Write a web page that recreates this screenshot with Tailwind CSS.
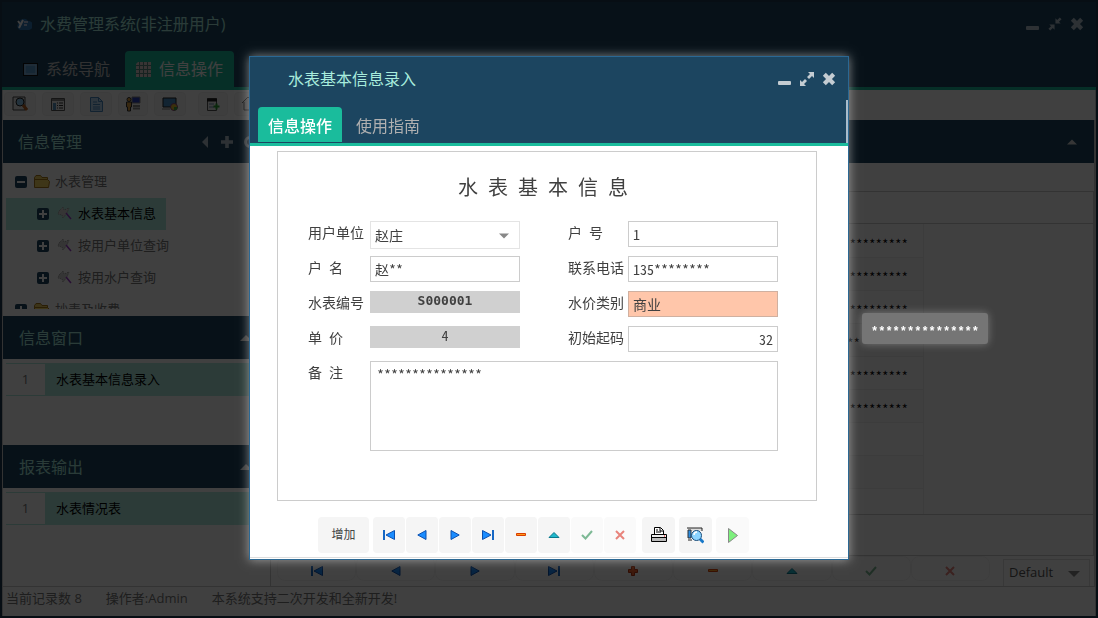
<!DOCTYPE html>
<html lang="zh-CN">
<head>
  <meta charset="UTF-8" />
  <meta name="viewport" content="width=device-width, initial-scale=1.0"/>
  <title>水费管理系统</title>
  <script src="https://cdn.jsdelivr.net/npm/@tailwindcss/browser@4"></script>
  <style>
    body {
      font-family: 'Open Sans', 'Noto Sans CJK SC', sans-serif;
    }
    .form-text {
      font-family: 'Noto Sans Mono CJK SC', 'Noto Sans CJK SC', monospace;
    }
  </style>
</head>
<body class="text-[13px] text-[#777] overflow-hidden">

  <!-- iconos compartidos -->
  <svg class="hidden">
    <symbol id="i-first" viewBox="0 0 12 10"><path d="M0 0h2v10H0z" fill="#1667c4"/><path d="M11.500.5v9L3 5z" fill="#1a8cff" stroke="#0b50b0"/></symbol>
    <symbol id="i-prev" viewBox="0 0 10 10"><path d="M9 .5v9L.8 5z" fill="#1a8cff" stroke="#0b50b0"/></symbol>
    <symbol id="i-next" viewBox="0 0 10 10"><path d="M1 .5v9L9.200 5z" fill="#1a8cff" stroke="#0b50b0"/></symbol>
    <symbol id="i-last" viewBox="0 0 12 10"><path d="M10 0h2v10h-2z" fill="#1667c4"/><path d="M.5.5v9L9 5z" fill="#1a8cff" stroke="#0b50b0"/></symbol>
    <symbol id="i-minus" viewBox="0 0 10 10"><path d="M.5 3.500h9v2h-9z" fill="#ff9a1a" stroke="#d83c00"/></symbol>
    <symbol id="i-plus" viewBox="0 0 10 10"><path d="M3.500.5h3v3h3v3h-3v3h-3v-3h-3v-3h3z" fill="#f2602a" stroke="#b8330c"/></symbol>
    <symbol id="i-up" viewBox="0 0 12 10"><path d="M6 2.500 11 7.500H1z" fill="#1fb8cc" stroke="#08788c"/></symbol>
    <symbol id="i-check" viewBox="0 0 12 10"><path d="M1 5l3.500 3.500L11 1" fill="none" stroke="#7db995" stroke-width="2"/></symbol>
    <symbol id="i-cross" viewBox="0 0 10 10"><path d="M1 1l8 8M9 1L1 9" fill="none" stroke="#e8837b" stroke-width="2"/></symbol>
    <symbol id="i-close" viewBox="0 0 12 12"><path d="M2 2l8 8M10 2l-8 8" stroke="currentColor" stroke-width="3.600" fill="none"/></symbol>
    <symbol id="i-min" viewBox="0 0 14 14"><rect y="9" width="13" height="4" rx="1" fill="currentColor"/></symbol>
    <symbol id="i-expand" viewBox="0 0 16 16"><path d="M9 1h6v6l-2-2-3 3-2-2 3-3zM7 15H1V9l2 2 3-3 2 2-3 3z" fill="currentColor"/></symbol>
    <symbol id="i-shrink" viewBox="0 0 16 16"><path d="M8.500 7.500v-6l2 2 3-3 2 2-3 3 2 2zM7.500 8.500v6l-2-2-3 3-2-2 3-3-2-2z" fill="currentColor"/></symbol>
    <symbol id="i-caret-up" viewBox="0 0 12 6"><path d="M6 0l6 6H0z" fill="currentColor"/></symbol>
    <symbol id="i-caret-down" viewBox="0 0 12 6"><path d="M0 0h12L6 6z" fill="currentColor"/></symbol>
    <symbol id="i-tree-plus" viewBox="0 0 12 12"><rect width="12" height="12" rx="2" fill="#1c4560"/><path d="M6 2v8M2 6h8" stroke="#fff" stroke-width="2"/></symbol>
    <symbol id="i-tree-minus" viewBox="0 0 12 12"><rect width="12" height="12" rx="2" fill="#1c4560"/><path d="M2 6h8" stroke="#fff" stroke-width="2"/></symbol>
    <symbol id="i-folder" viewBox="0 0 16 14"><path d="M.5 11V2.500L2 .5h4.500l1.500 2h5.500V5" fill="#f0d060" stroke="#a87818"/><path d="M.5 12.500V4.500h13l2 2-1 6z" fill="#f8d860" stroke="#a87818"/></symbol>
    <symbol id="i-tool" viewBox="0 0 16 16"><path d="M2 5 6 1l1 3 5-2-2 5-4 5-1-3-4-1z" fill="#d4d4d4" stroke="#999" stroke-dasharray="1 1"/><path d="M9 7l5 6" stroke="#9a3cc8" stroke-width="1.500"/></symbol>
  </svg>

  <!-- ventana principal -->
  <div class="h-screen flex flex-col bg-white border-2 border-[#1c3a52]">
    <header class="bg-[#1c4560] border-b-3 border-[#1abc9c]">
      <div class="h-12 flex items-center pl-[14px] pr-3 pb-[5px]">
        <svg class="w-4 h-4 mr-2" viewBox="0 0 16 16"><path d="M4 14a4 4 0 0 1-1-7 5 5 0 0 1 9-2 4 4 0 0 1 1 9z" fill="#2c78b8"/><path d="M2 5l3 4M7 4l-4 8" stroke="#fff" stroke-width="2" fill="none"/><path d="M8 6h4M8 9h3" stroke="#dde" stroke-width="1.500"/></svg>
        <h1 class="text-base text-[#a8ecdd] flex-1">水费管理系统(非注册用户)</h1>
        <div class="flex gap-2 text-[#b4c4d0]">
          <button aria-label="最小化"><svg class="w-[14px] h-[14px]"><use href="#i-min"/></svg></button>
          <button aria-label="还原"><svg class="w-[14px] h-[14px]"><use href="#i-shrink"/></svg></button>
          <button aria-label="关闭"><svg class="w-[14px] h-[14px]"><use href="#i-close"/></svg></button>
        </div>
      </div>
      <nav class="flex pl-[13px] pt-px text-base h-[37px]">
        <button class="flex items-center gap-2 pl-2 pr-[15px] text-[#c4c4c4]">
          <svg class="w-[15px] h-[13px]" viewBox="0 0 15 13"><rect x=".5" y=".5" width="14" height="12" fill="#5a9cd0" stroke="#111"/><rect x="2" y="2" width="11" height="9" fill="none" stroke="#9cc4e4"/></svg>
          系统导航
        </button>
        <button class="flex items-center gap-2 px-[11px] bg-[#1abc9c] text-white rounded-t">
          <svg class="w-[15px] h-[15px]" viewBox="0 0 15 15"><path d="M2 0h13v15H0V2z" fill="#e0d0d0"/><path d="M0 3.500h15M0 7.500h15M0 11.500h15M3.500 0v15M7.500 0v15M11.500 0v15" stroke="#5a8880"/></svg>
          信息操作
        </button>
      </nav>
    </header>

    <div class="h-[30px] flex items-center gap-[6px] pl-px pb-[2px] border-x border-[#ccc]">
      <button aria-label="查询" class="w-8 h-6 rounded bg-[#f8f8f8] border border-[#f0f0f0] flex items-center justify-center"><svg class="w-4 h-4" viewBox="0 0 16 16"><path d="M1 1h12v13H1z" fill="#e8e8e8" stroke="#444"/><circle cx="8" cy="6" r="4" fill="#8cc8f0" stroke="#222"/><path d="M11 9l4 5" stroke="#b86020" stroke-width="3"/></svg></button>
      <button aria-label="列表" class="w-8 h-6 rounded bg-[#f8f8f8] border border-[#f0f0f0] flex items-center justify-center"><svg class="w-[14px] h-[13px]" viewBox="0 0 14 13"><path d="M.5.5h13v12H.5z" fill="#eee" stroke="#555"/><path d="M1 2h12" stroke="#888" stroke-width="2"/><path d="M2 5h3v7H2z" fill="#5a94c0"/><path d="M6 5h1M8 5h4M6 7.500h1M8 7.500h4M6 10h1M8 10h4" stroke="#333"/></svg></button>
      <button aria-label="文档" class="w-8 h-6 rounded bg-[#f8f8f8] border border-[#f0f0f0] flex items-center justify-center"><svg class="w-[13px] h-[15px]" viewBox="0 0 13 15"><path d="M.5.5h8l4 4v10H.5z" fill="#b8d8f4" stroke="#4888c0"/><path d="M8.500.5v4h4M3 5h4M3 7.500h7M3 10h7M3 12h7" stroke="#4888c0" fill="none"/></svg></button>
      <button aria-label="用户" class="w-[30px] h-6 rounded bg-[#f8f8f8] border border-[#f0f0f0] flex items-center justify-center"><svg class="w-4 h-4" viewBox="0 0 16 16"><path d="M7 1h8v6H7z" fill="#2840c0" stroke="#888"/><path d="M8 10h7M8 12.500h7" stroke="#888" stroke-width="2"/><circle cx="4" cy="3.500" r="2" fill="#e0a040" stroke="#333"/><path d="M1.500 6h5v5h-1v4h-3v-4h-1z" fill="#e0a040" stroke="#333"/></svg></button>
      <button aria-label="图表" class="w-8 h-6 rounded bg-[#f8f8f8] border border-[#f0f0f0] flex items-center justify-center"><svg class="w-4 h-4" viewBox="0 0 16 16"><path d="M1 2h13v9H1z" fill="#4890c8" stroke="#222"/><path d="M0 13h8" stroke="#777"/><circle cx="12" cy="11" r="3.500" fill="#e8c030" stroke="#884488"/><path d="M12 11h3.500A3.500 3.500 0 0 1 12 14.500z" fill="#40a840"/></svg></button>
      <button aria-label="新增" class="w-[30px] h-6 ml-[6px] rounded bg-[#f8f8f8] border border-[#f0f0f0] flex items-center justify-center"><svg class="w-[14px] h-[13px]" viewBox="0 0 14 13"><path d="M1.500.5h9v12h-9z" fill="#eee" stroke="#555"/><path d="M1 2h10" stroke="#222" stroke-width="3"/><path d="M3 6h5M3 9h5" stroke="#68a"/><path d="M10.500 5.500v6M7.500 8.500h6" stroke="#28a030" stroke-width="2"/></svg></button>
      <button aria-label="主页" class="w-8 h-6 rounded bg-[#f8f8f8] border border-[#f0f0f0] flex items-center pl-[6px]"><svg class="w-4 h-4" viewBox="0 0 16 16"><path d="M1 7 7 1l6 6M3 6v8h9V6" fill="none" stroke="#555"/></svg></button>
    </div>

    <div class="flex-1 min-h-0 flex border-l border-r-2 border-[#ccc]">
      <!-- panel izquierdo -->
      <aside class="w-[268px] flex flex-col border-r border-[#ccc]">
        <section class="h-[196px] flex flex-col">
          <div class="h-[43px] shrink-0 flex items-center bg-[#1c4560] pl-[15px] text-base text-[#a8ecdd]">
            <h2 class="w-[184px]">信息管理</h2>
            <svg class="w-[6px] h-3 text-[#b4c4d0]" viewBox="0 0 6 12"><path d="M6 0v12L0 6z" fill="currentColor"/></svg>
            <svg class="w-3 h-3 ml-[13px] text-[#b4c4d0]" viewBox="0 0 12 12"><path d="M6 0v12M0 6h12" stroke="currentColor" stroke-width="3.600"/></svg>
            <svg class="w-3 h-3 ml-[11px] text-[#b4c4d0]" viewBox="0 0 12 12"><circle cx="6" cy="6" r="4.500" fill="none" stroke="currentColor" stroke-width="3"/></svg>
          </div>
          <ul class="mt-[3px] mb-[7px] pl-[3px] overflow-hidden text-[#777]">
            <li class="h-8 flex items-center pl-[9px]"><svg class="w-3 h-3 mr-[7px]"><use href="#i-tree-minus"/></svg><svg class="w-4 h-[14px] mr-[5px]"><use href="#i-folder"/></svg>水表管理</li>
            <li class="h-8 w-40 flex items-center pl-[31px] bg-[#b0ece0] text-black"><svg class="w-3 h-3 mr-2"><use href="#i-tree-plus"/></svg><svg class="w-4 h-4 mr-[5px]"><use href="#i-tool"/></svg>水表基本信息</li>
            <li class="h-8 flex items-center pl-[31px]"><svg class="w-3 h-3 mr-2"><use href="#i-tree-plus"/></svg><svg class="w-4 h-4 mr-[5px]"><use href="#i-tool"/></svg>按用户单位查询</li>
            <li class="h-8 flex items-center pl-[31px]"><svg class="w-3 h-3 mr-2"><use href="#i-tree-plus"/></svg><svg class="w-4 h-4 mr-[5px]"><use href="#i-tool"/></svg>按用水户查询</li>
            <li class="h-8 flex items-center pl-[9px]"><svg class="w-3 h-3 mr-[7px]"><use href="#i-tree-plus"/></svg><svg class="w-4 h-[14px] mr-[5px]"><use href="#i-folder"/></svg>抄表及收费</li>
          </ul>
        </section>
        <section class="h-[129px]">
          <div class="h-[43px] flex items-center justify-between bg-[#1c4560] pl-4 pr-[18px] pt-px text-base text-[#a8ecdd]">
            <h2>信息窗口</h2>
            <svg class="w-3 h-[6px] text-[#d8d8d8]"><use href="#i-caret-up"/></svg>
          </div>
          <div class="mt-1 ml-[3px] flex h-[33px] items-center border-y border-[#b0ece0]">
            <span class="w-[39px] text-center">1</span>
            <span class="flex-1 h-full flex items-center pl-[11px] pt-px bg-[#b0ece0] text-black">水表基本信息录入</span>
          </div>
        </section>
        <section class="flex-1">
          <div class="h-[43px] flex items-center justify-between bg-[#1c4560] pl-4 pr-[18px] pt-px text-base text-[#a8ecdd]">
            <h2>报表输出</h2>
            <svg class="w-3 h-[6px] text-[#d8d8d8]"><use href="#i-caret-up"/></svg>
          </div>
          <div class="mt-1 ml-[3px] flex h-[33px] items-center border-y border-[#b0ece0]">
            <span class="w-[39px] text-center">1</span>
            <span class="flex-1 h-full flex items-center pl-[11px] pt-px bg-[#b0ece0] text-black">水表情况表</span>
          </div>
        </section>
      </aside>

      <!-- tabla de registros -->
      <main class="flex-1 min-w-0 flex flex-col">
        <div class="h-[43px] flex items-center justify-end bg-[#1c4560] pr-[17px] pt-px">
          <svg class="w-[10px] h-[6px] text-[#d8d8d8]"><use href="#i-caret-up"/></svg>
        </div>
        <div class="h-[29px] border-b border-[#ccc]"></div>
        <div class="h-8 border-b border-r border-[#ccc]"></div>
        <div class="flex-1 min-h-0 overflow-hidden border-r border-[#ccc]">
          <table class="form-text w-[653px] text-right text-black border-r border-[#eee]">
            <tbody>
              <tr class="h-[33px] border-b border-[#eee]"><td class="pr-[15px] pt-[6px]">***************</td></tr>
              <tr class="h-[33px] border-b border-[#eee] bg-[#f9f9f9]"><td class="pr-[15px] pt-[6px]">***************</td></tr>
              <tr class="h-[33px] border-b border-[#eee]"><td class="pr-[15px] pt-[6px]">***************</td></tr>
              <tr class="h-[33px] border-b border-[#eee] bg-[#f9f9f9]"><td class="pr-[63px] pt-[6px]">***********</td></tr>
              <tr class="h-[33px] border-b border-[#eee]"><td class="pr-[15px] pt-[6px]">***************</td></tr>
              <tr class="h-[33px] border-b border-[#eee] bg-[#f9f9f9]"><td class="pr-[15px] pt-[6px]">***************</td></tr>
              <tr class="h-[33px] border-b border-[#eee]"><td></td></tr>
              <tr class="h-[33px] border-b border-[#eee] bg-[#f9f9f9]"><td></td></tr>
              <tr class="h-[33px]"><td></td></tr>
            </tbody>
          </table>
        </div>
        <div class="h-[42px] border-y border-r border-[#ccc]"></div>
        <div class="h-[30px] flex items-start pl-[6px]">
          <div class="flex-1 grid grid-cols-9">
            <button aria-label="首记录" class="h-[25px] rounded-lg border border-[#f4f4f4] flex items-center justify-center pt-1"><svg class="w-3 h-[10px]"><use href="#i-first"/></svg></button>
            <button aria-label="上一条" class="h-[25px] rounded-lg border border-[#f4f4f4] flex items-center justify-center pt-1"><svg class="w-[10px] h-[10px]"><use href="#i-prev"/></svg></button>
            <button aria-label="下一条" class="h-[25px] rounded-lg border border-[#f4f4f4] flex items-center justify-center pt-1"><svg class="w-[10px] h-[10px]"><use href="#i-next"/></svg></button>
            <button aria-label="末记录" class="h-[25px] rounded-lg border border-[#f4f4f4] flex items-center justify-center pt-1"><svg class="w-3 h-[10px]"><use href="#i-last"/></svg></button>
            <button aria-label="新增" class="h-[25px] rounded-lg border border-[#f4f4f4] flex items-center justify-center pt-1"><svg class="w-[10px] h-[10px]"><use href="#i-plus"/></svg></button>
            <button aria-label="删除" class="h-[25px] rounded-lg border border-[#f4f4f4] flex items-center justify-center pt-1"><svg class="w-[10px] h-[10px]"><use href="#i-minus"/></svg></button>
            <button aria-label="编辑" class="h-[25px] rounded-lg border border-[#f4f4f4] flex items-center justify-center pt-1"><svg class="w-3 h-[10px]"><use href="#i-up"/></svg></button>
            <button aria-label="保存" class="h-[25px] rounded-lg border border-[#f4f4f4] flex items-center justify-center pt-1"><svg class="w-3 h-[10px]"><use href="#i-check"/></svg></button>
            <button aria-label="取消" class="h-[25px] rounded-lg border border-[#f4f4f4] flex items-center justify-center pt-1"><svg class="w-[10px] h-[10px]"><use href="#i-cross"/></svg></button>
          </div>
          <div class="relative w-[87px] ml-[13px] mr-1 mt-[3px]">
            <select aria-label="主题" class="appearance-none w-full h-[27px] pl-[5px] border border-b-0 border-[#e0e0e0] text-[#555]"><option>Default</option></select>
            <svg class="absolute right-[10px] top-3 w-3 h-[6px] text-[#888] pointer-events-none"><use href="#i-caret-down"/></svg>
          </div>
        </div>
      </main>
    </div>

    <footer class="h-[30px] flex items-center gap-6 pl-[3px] pb-[6px] border-x border-t border-[#ccc]">
      <span>当前记录数 8</span>
      <span>操作者:Admin</span>
      <span>本系统支持二次开发和全新开发!</span>
    </footer>
  </div>

  <!-- capa oscura y ventana emergente -->
  <div class="fixed inset-0 pb-[2px] bg-black/75 flex items-center justify-center">
    <div class="w-[600px] bg-white border border-[#2b6893] shadow-[0_0_10px_rgba(255,255,255,0.5)]">
      <div class="bg-[#1c4560]">
        <div class="h-[43px] flex items-center pl-[38px] pr-3">
          <h2 class="flex-1 text-base text-[#a8ecdd]">水表基本信息录入</h2>
          <div class="flex gap-[7px] text-[#c4ccd2]">
            <button aria-label="最小化"><svg class="w-[14px] h-[14px]"><use href="#i-min"/></svg></button>
            <button aria-label="最大化"><svg class="w-4 h-4"><use href="#i-expand"/></svg></button>
            <button aria-label="关闭"><svg class="w-[14px] h-[14px]"><use href="#i-close"/></svg></button>
          </div>
        </div>
        <nav class="h-[43px] flex items-end pl-2 pb-px gap-1 text-base border-r-2 border-[#a9bccb]">
          <button class="h-[35px] pt-[2px] px-[10px] bg-[#1abc9c] text-white rounded-t font-medium">信息操作</button>
          <button class="h-[35px] pt-[2px] px-[10px] text-[#b0b0b0]">使用指南</button>
        </nav>
        <div class="h-[3px] bg-[#1abc9c]"></div>
      </div>

      <form class="form-text mx-[27px] mr-[31px] mt-[5px] pt-[21px] pl-[30px] pr-[38px] pb-[49px] border border-[#ccc] text-sm text-[#404040]">
        <h3 class="text-xl leading-7 mb-5 text-center whitespace-pre">水 表 基 本 信 息</h3>
        <div class="grid grid-cols-[62px_1fr_108px_1fr] auto-rows-[26px] gap-y-[9px]">
          <label for="unit" class="leading-[22px]">用户单位</label>
          <div class="relative">
            <select id="unit" class="appearance-none w-full h-7 px-1 border border-[#e4e4e4]"><option>赵庄</option></select>
            <svg class="absolute right-[11px] top-3 w-[10px] h-[6px] text-[#888] pointer-events-none"><use href="#i-caret-down"/></svg>
          </div>
          <label for="no" class="pl-12 leading-[22px]">户 号</label>
          <input id="no" value="1" class="min-w-0 px-1 border border-[#ccc]" />

          <label for="name" class="leading-[22px]">户 名</label>
          <input id="name" value="赵**" class="min-w-0 px-1 border border-[#ccc]" />
          <label for="tel" class="pl-12 leading-[22px]">联系电话</label>
          <input id="tel" value="135********" class="min-w-0 px-1 border border-[#ccc]" />

          <label for="meter" class="leading-[22px]">水表编号</label>
          <input id="meter" readonly value="S000001" class="min-w-0 h-[22px] pb-1 px-1 bg-[#d0d0d0] text-center font-bold text-[13px] font-['DejaVu_Sans_Mono']" />
          <label for="type" class="pl-12 leading-[22px]">水价类别</label>
          <input id="type" value="商业" class="min-w-0 px-1 bg-[#ffc6aa] border border-[#d0b0a0]" />

          <label for="price" class="leading-[22px]">单 价</label>
          <input id="price" readonly value="4" class="min-w-0 h-[22px] pb-1 px-1 bg-[#d0d0d0] text-center" />
          <label for="start" class="pl-12 leading-[22px]">初始起码</label>
          <input id="start" value="32" class="min-w-0 px-1 border border-[#ccc] text-right" />
        </div>
        <div class="flex mt-[9px]">
          <label for="memo" class="w-[62px] shrink-0 leading-[22px]">备 注</label>
          <textarea id="memo" class="flex-1 h-[90px] px-[6px] py-[2px] border border-[#ccc] resize-none">***************</textarea>
        </div>
      </form>

      <div class="flex mt-4 pl-[68px] pb-1">
        <button class="w-[51px] h-9 mr-1 rounded bg-[#f5f5f5] text-xs text-[#444]">增加</button>
        <button aria-label="首记录" class="w-[33px] h-9 rounded bg-[#f5f5f5] border-r border-white flex items-center justify-center"><svg class="w-3 h-[10px]"><use href="#i-first"/></svg></button>
        <button aria-label="上一条" class="w-[33px] h-9 rounded bg-[#f5f5f5] border-r border-white flex items-center justify-center"><svg class="w-[10px] h-[10px]"><use href="#i-prev"/></svg></button>
        <button aria-label="下一条" class="w-[33px] h-9 rounded bg-[#f5f5f5] border-r border-white flex items-center justify-center"><svg class="w-[10px] h-[10px]"><use href="#i-next"/></svg></button>
        <button aria-label="末记录" class="w-[33px] h-9 rounded bg-[#f5f5f5] border-r border-white flex items-center justify-center"><svg class="w-3 h-[10px]"><use href="#i-last"/></svg></button>
        <button aria-label="删除" class="w-[33px] h-9 rounded bg-[#f5f5f5] border-r border-white flex items-center justify-center"><svg class="w-[10px] h-[10px]"><use href="#i-minus"/></svg></button>
        <button aria-label="编辑" class="w-[33px] h-9 rounded bg-[#f5f5f5] border-r border-white flex items-center justify-center"><svg class="w-3 h-[10px]"><use href="#i-up"/></svg></button>
        <button aria-label="保存" class="w-[33px] h-9 rounded bg-[#fafafa] border-r border-white flex items-center justify-center"><svg class="w-3 h-[10px]"><use href="#i-check"/></svg></button>
        <button aria-label="取消" class="w-[33px] h-9 rounded bg-[#fafafa] border-r border-white flex items-center justify-center"><svg class="w-[10px] h-[10px]"><use href="#i-cross"/></svg></button>
        <button aria-label="打印" class="w-[33px] h-9 ml-[5px] mr-1 rounded bg-[#f5f5f5] flex items-center justify-center">
          <svg class="w-4 h-4" viewBox="0 0 16 16"><path d="M3.500 7.500v-7h6l3 3v4z" fill="#fff" stroke="#000"/><path d="M9 1v3h3M5 3h2M5 5h5" stroke="#000" fill="none"/><path d="M.5 7.500h15v7H.5z" fill="#eee" stroke="#000"/><path d="M0 10.500h16" stroke="#000"/><path d="M1 12.500h14" stroke="#bbb" stroke-width="3"/><path d="M13 9h1" stroke="#e00"/></svg>
        </button>
        <button aria-label="预览" class="w-[33px] h-9 mr-1 rounded bg-[#f5f5f5] flex items-center justify-center">
          <svg class="w-[17px] h-[17px]" viewBox="0 0 17 17"><path d="M1 1h14v3H1z" fill="#ddd"/><path d="M0 1h15M15 1v3M1 13h4" stroke="#222"/><path d="M1 3h3v8H1z" fill="#2c8ce0" stroke="#333"/><circle cx="9.500" cy="8.500" r="5" fill="#8cd4ff" stroke="#174a78"/><path d="M7 8a3 3 0 0 1 3-3" stroke="#fff" stroke-width="1.500" fill="none"/><path d="M13 12l3.500 3.500" stroke="#1878c8" stroke-width="3"/></svg>
        </button>
        <button aria-label="执行" class="w-[33px] h-9 rounded bg-[#fafafa] flex items-center justify-center">
          <svg class="w-[10px] h-[15px]" viewBox="0 0 10 15"><path d="M.5.5 9.500 7.500.5 14.500z" fill="#7df07d" stroke="#888"/></svg>
        </button>
      </div>
      <div class="h-[2px] border-t border-[#ddd]"></div>
    </div>
  </div>

  <!-- mensaje flotante -->
  <div class="fixed left-[862px] top-[313px] h-[31px] px-[9px] pt-1 rounded-[3px] bg-[#757575] text-white text-xs leading-[31px] font-bold font-['Liberation_Mono'] shadow-[0_0_8px_rgba(255,255,255,0.3)]">***************</div>

</body>
</html>
